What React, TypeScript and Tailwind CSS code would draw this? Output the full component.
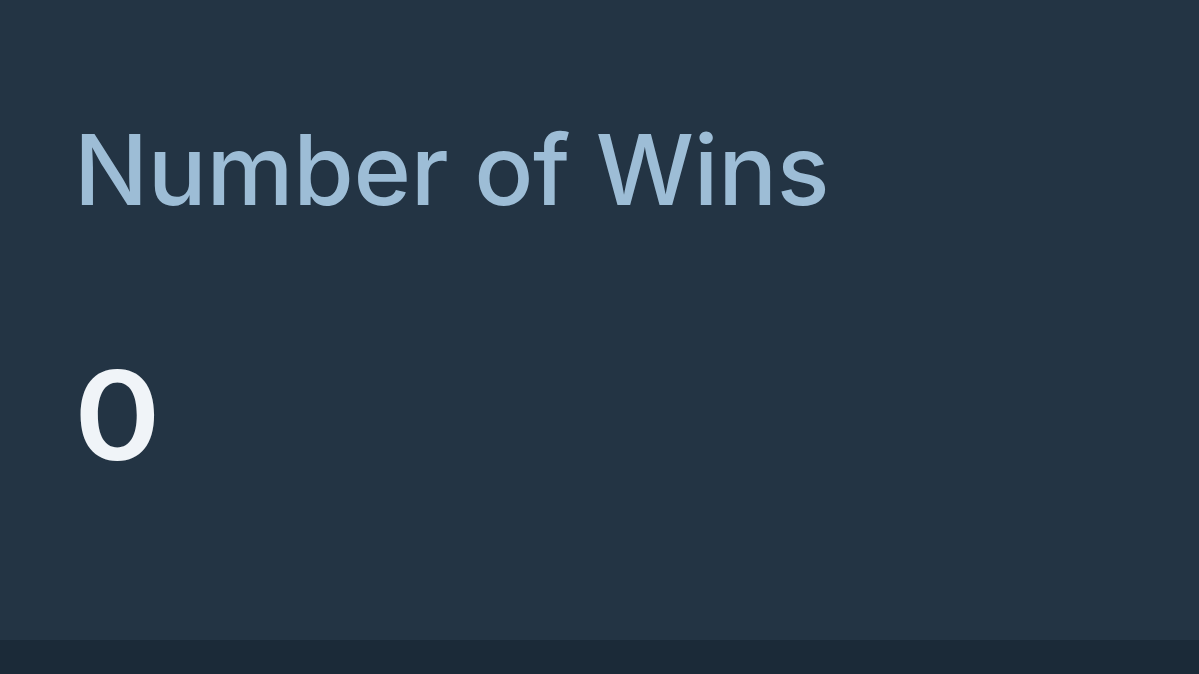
export default function App() {
  return (
    <div className="w-[1199px] h-[674px] flex flex-col bg-[#1b2a38] font-['Inter','Liberation_Sans',Arial,sans-serif]">
      <div className="h-[640px] bg-[#233444] pl-[74px] pt-[120px] flex flex-col">
        <div className="text-[98px] leading-[100px] text-[#9dbdd6] font-medium tracking-[-0.3px]">Number of Wins</div>
        <div className="mt-[130px] text-[124px] leading-[130px] text-[#f0f4f8] font-semibold">
          <span className="inline-block origin-left scale-x-[1.06]">0</span>
        </div>
      </div>
      <div className="flex-1 bg-[#1b2a38]" />
    </div>
  );
}
